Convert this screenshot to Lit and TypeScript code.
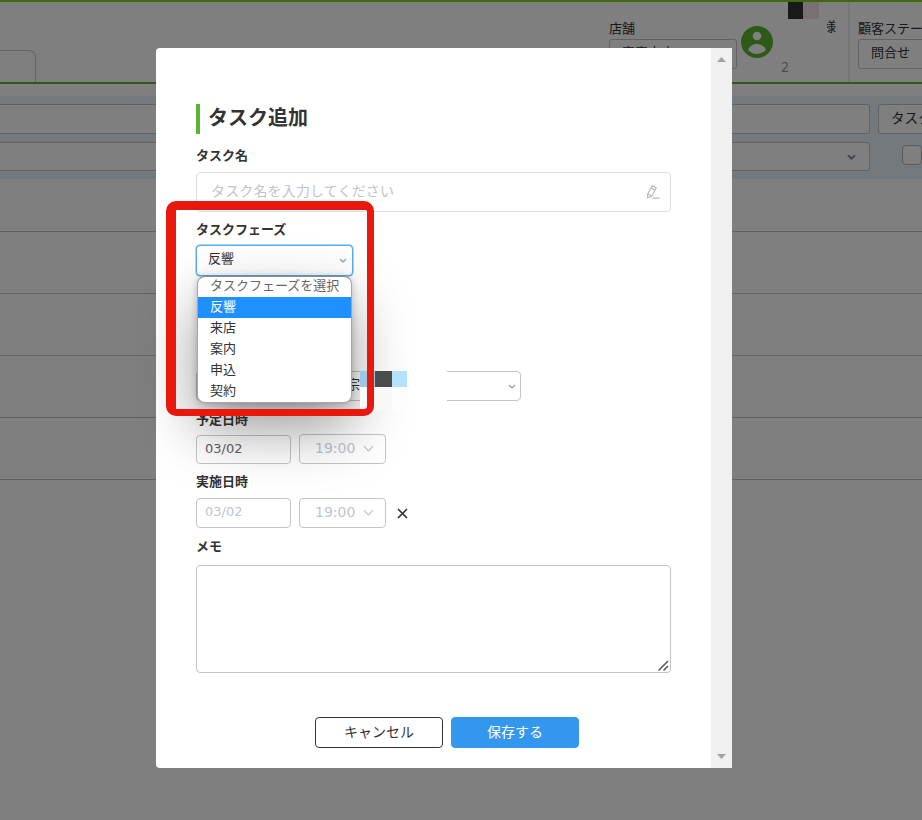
import { LitElement, html, css, svg } from "lit";
import { customElement, property } from "lit/decorators.js";

const chevron = (w: number, h: number, stroke: string, sw: number) => svg`
  <svg width=${w} height=${h} viewBox="0 0 ${w} ${h}" fill="none" stroke=${stroke} stroke-width=${sw}>
    <path d="M1 1.2 L${w / 2} ${h - 1.2} L${w - 1} 1.2"></path>
  </svg>`;

const base = css`
  *, *::before, *::after { box-sizing: border-box; }
  svg { display: block; flex: none; }
`;

@customElement("task-page")
class TaskPage extends LitElement {
  static styles = [base, css`
    :host { display: block; width: 922px; height: 820px; background: #fff; color: #333; }
    .header { height: 84px; border-top: 2px solid #7dd31f; border-bottom: 2px solid #5cb531; display: flex; position: relative; overflow: hidden; }
    .header > * { flex: none; }
    .tab { width: 36px; height: 32px; margin-top: 48px; border: 1px solid #c4c4c4; border-left: 0; border-bottom: 0; border-top-right-radius: 7px; }
    .shop { margin-left: 573px; width: 128px; padding-top: 16px; }
    .label { font-size: 13px; line-height: 19px; height: 21px; white-space: nowrap; }
    .box { height: 30px; border: 1px solid #c4c4c4; border-radius: 3px; font-size: 13px; line-height: 23px; padding-left: 12px; white-space: nowrap; }
    .user { width: 113px; padding: 24px 0 0 4px; border-right: 2px solid #e4eef6; display: flex; position: relative; }
    .count { font-family: "Noto Sans", sans-serif; font-size: 13.5px; line-height: 16px; color: #999; margin: 33px 0 0 8px; }
    .m1, .m2 { position: absolute; top: 0; height: 17px; }
    .m1 { left: 51px; width: 15px; background: #333; }
    .m2 { left: 66px; width: 16px; background: #f0e2e2; }
    .sama { position: absolute; left: 90px; top: 15px; width: 9px; height: 18px; overflow: hidden; display: flex; justify-content: flex-end; font-size: 13px; line-height: 17px; }
    .status { margin-left: 8px; width: 160px; padding-top: 16px; }
    .filters { margin-top: 12px; height: 83px; background: #e8f2fa; padding: 8px 0 0; display: grid; grid-template-columns: 870px 160px; grid-template-rows: 30px 29px; gap: 8px; overflow: hidden; }
    .field { background: #fff; border: 1px solid #c4c4c4; border-radius: 3px; display: flex; align-items: center; justify-content: flex-end; padding-right: 13px; }
    .field.wide { border-left: 0; border-radius: 0 3px 3px 0; }
    .field.text { justify-content: flex-start; padding: 0 0 5px 12px; font-size: 13.5px; white-space: nowrap; }
    .check { width: 20px; height: 20px; margin: 3px 0 0 24px; border: 1px solid #b4b4b4; border-radius: 4px; background: #fff; }
    .row { height: 62px; border-bottom: 1px solid #c4c4c4; }
    .row.first { height: 53px; }
  `];
  render() {
    return html`
      <div class="header">
        <div class="tab"></div>
        <div class="shop"><div class="label">店舗</div><div class="box">恵恵支店</div></div>
        <div class="user">
          <svg width="32" height="32" viewBox="0 0 32 32">
            <circle cx="16" cy="16" r="16" fill="#5cb531"></circle>
            <circle cx="16" cy="10" r="4.3" fill="#fff"></circle>
            <path d="M7 23.5 Q10 18 16 18 Q22 18 25 23.5 Q21.500 28 16 28 Q10.500 28 7 23.500Z" fill="#fff"></path>
          </svg>
          <span class="count">2</span>
          <i class="m1"></i><i class="m2"></i><span class="sama">様</span>
        </div>
        <div class="status"><div class="label">顧客ステータス</div><div class="box">問合せ</div></div>
      </div>
      <div class="filters">
        <div class="field wide"></div><div class="field text">タスク</div>
        <div class="field wide">${chevron(9, 6, "#8795ab", 2)}</div><div class="check"></div>
      </div>
      <div class="row first"></div>
      ${[1, 2, 3, 4].map(() => html`<div class="row"></div>`)}
    `;
  }
}

@customElement("phase-select")
class PhaseSelect extends LitElement {
  @property() value = "反響";
  static styles = [base, css`
    :host { display: block; position: relative; width: 157px; height: 31px; }
    .control { width: 157px; height: 31px; border: 1.5px solid #5aaeee; box-shadow: 0 0 0 .5px #5aaeee; border-radius: 4px; background: #fff; display: flex; justify-content: space-between; align-items: center; padding: 0 5px 6px 11px; font-size: 13px; }
    .control svg { margin-top: 5px; }
    .menu { position: absolute; left: 1px; top: 31px; width: 155px; height: 127px; z-index: 2; border: 1px solid #a6a6a6; border-top-color: #888; border-radius: 8px; background: #fff; overflow: hidden; box-shadow: 0 26px 58px rgba(0,0,0,.4), 0 1px 7px rgba(0,0,0,.22); font-size: 13px; }
    .item { height: 21px; line-height: 17px; padding-left: 12px; white-space: nowrap; }
    .hint { color: #666; height: 20px; line-height: 16px; }
    .on { background: #1e90ff; color: #fff; }
  `];
  render() {
    return html`
      <div class="control">${this.value}${chevron(8, 5, "#a2b1c2", 1.7)}</div>
      <div class="menu">
        <div class="item hint">タスクフェーズを選択</div>
        ${["反響", "来店", "案内", "申込", "契約"].map(
          (o) => html`<div class="item ${o === this.value ? "on" : ""}">${o}</div>`)}
      </div>`;
  }
}

@customElement("task-dialog")
class TaskDialog extends LitElement {
  static styles = [base, css`
    :host { display: flex; isolation: isolate; width: 576px; height: 720px; background: #fff; border-radius: 4px 0 0 4px; color: #333; }
    .body { width: 555px; padding: 56px 40px 0; display: flex; flex-direction: column; }
    .title { height: 30px; border-left: 4px solid #5cb531; padding-left: 8px; font-size: 20px; line-height: 25px; font-weight: 700; }
    .label { font-size: 13px; font-weight: 700; line-height: 18px; height: 20px; }
    .name { margin-top: 6px; height: 40px; border: 1px solid #dcdfe6; border-radius: 4px; display: flex; align-items: center; justify-content: space-between; padding: 0 10px 5px 14px; font-size: 14px; letter-spacing: .15px; color: #c0c4cc; }
    .name svg { margin-top: 4px; }
    .l1 { margin-top: 12px; } .l2 { margin-top: 8px; } .l3 { margin-top: 9px; } .l4 { margin-top: 8px; } .l5 { margin-top: 9px; }
    .phase { margin-top: 5px; }
    .owner { margin-top: 95px; width: 325px; height: 30px; border: 1px solid #c4c4c4; border-radius: 4px; display: flex; justify-content: flex-end; align-items: center; padding: 0 4px 0 0; }
    .part { width: 9px; overflow: hidden; display: flex; justify-content: flex-end; margin-right: 148px; font-size: 13px; padding-bottom: 5px; }
    .dates { display: flex; gap: 8px; align-items: flex-end; font-family: "DejaVu Sans", sans-serif; height: 30px; }
    .d1 { margin-top: 4px; } .d2 { margin-top: 6px; }
    .date, .time { border: 1px solid #c4c4c4; border-radius: 4px; }
    .date { width: 95px; height: 29px; line-height: 25px; padding-left: 8px; font-size: 13px; color: #606266; }
    .time { width: 87px; height: 30px; display: flex; align-items: center; padding: 0 0 2px 15px; gap: 8px; font-size: 14px; color: #c0c4cc; }
    .d2 .date { color: #c0c4cc; height: 30px; }
    .d2 .x { margin: 0 0 9px 3px; }
    .memo { margin-top: 8px; height: 108px; border: 1px solid #c4c4c4; border-radius: 4px; display: flex; justify-content: flex-end; align-items: flex-end; padding: 0 1px 1px 0; }
    .buttons { margin-top: 44px; display: flex; justify-content: center; gap: 8px; padding-left: 27px; }
    .btn { flex: none; width: 128px; height: 31px; border: 1px solid #333; border-radius: 4px; text-align: center; font-size: 14px; line-height: 27px; }
    .primary { background: #3497ee; border-color: #3497ee; color: #fff; }
    .scroll { width: 21px; background: #f0f0f0; display: flex; flex-direction: column; justify-content: space-between; align-items: center; padding: 9px 0; }
  `];
  render() {
    return html`
      <div class="body">
        <div class="title">タスク追加</div>
        <div class="label l1">タスク名</div>
        <div class="name">タスク名を入力してください
          <svg width="14" height="14" viewBox="0 0 14 14" fill="none" stroke="#b4b9c3" stroke-width="1.2">
            <path d="M6.200 .800 L10.200 3 L5.700 11 L1.500 12.900 L1.700 8.800 Z M5 2.900 L9 5.200 M1.700 8.800 L5.700 11 M7 13.200 H13.500"></path>
          </svg>
        </div>
        <div class="label l2">タスクフェーズ</div>
        <phase-select class="phase"></phase-select>
        <div class="owner"><span class="part">宗</span>${chevron(8, 5, "#a2b1c2", 1.7)}</div>
        <div class="label l3">予定日時</div>
        <div class="dates d1"><div class="date">03/02</div><div class="time">19:00${chevron(11, 7, "#c0c4cc", 1.2)}</div></div>
        <div class="label l4">実施日時</div>
        <div class="dates d2">
          <div class="date">03/02</div><div class="time">19:00${chevron(11, 7, "#c0c4cc", 1.2)}</div>
          <svg class="x" width="11" height="11" viewBox="0 0 11 11" stroke="#333" stroke-width="1.7"><path d="M1 1 L10 10 M10 1 L1 10"></path></svg>
        </div>
        <div class="label l5">メモ</div>
        <div class="memo"><svg width="11" height="11" viewBox="0 0 11 11" stroke="#555" stroke-width="1.5"><path d="M.5 10.500 L10 1 M5.500 10.500 L10 6"></path></svg></div>
        <div class="buttons"><div class="btn">キャンセル</div><div class="btn primary">保存する</div></div>
      </div>
      <div class="scroll">
        <svg width="9" height="5" viewBox="0 0 9 5"><path d="M0 5 L4.500 0 L9 5Z" fill="#a3a3a3"></path></svg>
        <svg width="9" height="5" viewBox="0 0 9 5"><path d="M0 0 L4.500 5 L9 0Z" fill="#a3a3a3"></path></svg>
      </div>`;
  }
}

@customElement("app-root")
class AppRoot extends LitElement {
  static styles = [base, css`
    :host { display: block; position: relative; width: 922px; height: 820px; overflow: hidden; font-family: "Noto Sans CJK JP", sans-serif; }
    .shade { position: absolute; inset: 0; background: rgba(0,0,0,.5); display: flex; justify-content: center; padding: 48px 34px 0 0; }
    .mark { position: absolute; left: 166px; top: 201px; width: 208px; height: 215px; border: solid #e8180c; border-width: 9px 7px 7px 10px; border-radius: 10px; }
    .tile { position: absolute; top: 371px; height: 16px; }
    .gap { left: 407px; width: 40px; height: 31px; background: #fff; }
    .soft { left: 360px; top: 371px; width: 32px; height: 40px; background: #f8f8f8; }
    .pale { left: 392px; width: 15px; height: 40px; background: #fdfdfd; }
    .a { left: 360px; width: 15px; background: #9ac9e8; }
    .b { left: 375px; width: 17px; background: #4b4b4b; }
    .c { left: 392px; width: 15px; background: #b3e3fa; }
  `];
  render() {
    return html`
      <task-page></task-page>
      <div class="shade"><task-dialog></task-dialog></div>
      <i class="tile gap"></i><i class="tile soft"></i><i class="tile pale"></i><i class="tile a"></i>
      <div class="mark"></div>
      <i class="tile b"></i><i class="tile c"></i>`;
  }
}
